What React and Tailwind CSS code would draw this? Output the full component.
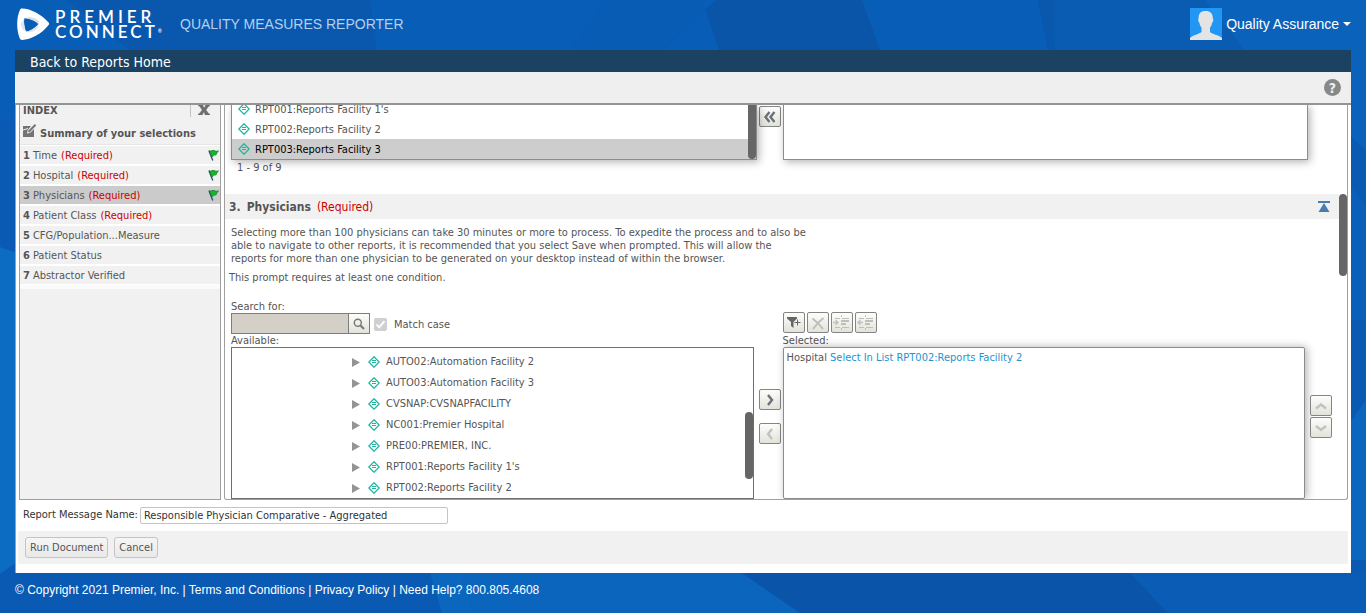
import React from "react";

const ui = "font-['DejaVu_Sans_Condensed','Noto_Sans',sans-serif]";
const iconButton =
  "flex h-[21px] w-[22px] shrink-0 items-center justify-center rounded-[2px] border border-[#858585] bg-linear-to-b from-[#fdfdfb] to-[#e2e3da]";

function Backdrop() {
  return (
    <svg
      className="absolute inset-0 -z-10 h-full w-full"
      viewBox="0 0 1366 613"
      preserveAspectRatio="none"
      aria-hidden="true"
    >
      <rect width="1366" height="613" fill="#0a5ab3" />
      <path d="M0 0H66L130 50V120H0Z" fill="#085db6" />
      <path d="M66 0H370L377 50H130Z" fill="#0a58ae" />
      <path d="M370 0H606L571 50H377Z" fill="#085db6" />
      <path d="M606 0H702L719 50H571Z" fill="#085cb4" />
      <path d="M716 0H862L880 50H662Z" fill="#0b55a9" />
      <path d="M702 0H716L662 50H719Z" fill="#085db6" />
      <path d="M862 0H1038L1048 50H880Z" fill="#085db6" />
      <path d="M1038 0H1054L1055 50H1048Z" fill="#0a58ae" />
      <path d="M1054 0H1205L1245 50H1055Z" fill="#0a5bb2" />
      <path d="M1205 0H1366V150L1320 110L1245 50Z" fill="#0a62bb" />
      <path d="M1345 180L1366 205V320H1345Z" fill="#0a5fb9" />
      <path d="M0 247L20 254V560L0 574Z" fill="#0b6cc2" />
      <path d="M1345 430L1366 400V560H1345Z" fill="#0b66be" />
      <path d="M430 573H462L473 613H442Z" fill="#0b66be" />
      <path d="M462 573H742L800 613H473Z" fill="#0b65bd" />
      <path d="M742 573H1130L1168 613H800Z" fill="#0a55aa" />
      <path d="M1130 573H1366V613H1168Z" fill="#0a5cb5" />
    </svg>
  );
}

function Logo() {
  return (
    <a href="#home" className="flex items-center gap-[6px] text-white" aria-label="Premier Connect">
      <svg width="32" height="32" viewBox="0 0 32 32" className="shrink-0" aria-hidden="true">
        <path
          fillRule="evenodd"
          fill="#fff"
          d="M5 0.4C13 0.2 25 6.5 31.6 14.4C32.2 15.2 32.2 16.2 31.6 17C25 25.500 14 31.700 5.200 32C3.800 32 3.200 31.500 2.700 30.300C-0.700 21.500 -0.700 10 3 1.800C3.400 0.800 4 0.400 5 0.400ZM7.300 10.300C6.600 14 7.200 19.500 9 23.600C13.500 23 18.500 20 21.400 16C18.500 13 12.500 10.300 7.300 10.300Z"
        />
        <path d="M7.300 10.300C12.500 10.300 18.500 13 21.400 16L22.500 13.500C17.500 9.500 12 8.300 7.300 10.300Z" fill="#d9dee6" />
        <path d="M9 23.600C7.200 19.500 6.600 14 7.300 10.300L3.500 16C4.300 20 6 22.500 9 23.600Z" fill="#e2e6ec" />
        <path d="M9 23.600C13.500 23 18.500 20 21.400 16L21 20C17.500 23.500 13 25.500 9 23.600Z" fill="#e2e6ec" />
      </svg>
      <span className="flex flex-col font-['Lato',sans-serif] text-[17px] leading-[15px] font-semibold tracking-[4px]">
        <span>PREMIER</span>
        <span className="flex tracking-[3px]">
          CONNECT<small className="self-end text-[5px] leading-[15px] tracking-normal">®</small>
        </span>
      </span>
    </a>
  );
}

function Header() {
  return (
    <header className="flex h-[50px] items-center justify-between pr-[15px] pb-[2px] pl-[17px] font-['Liberation_Sans',Arial,sans-serif]">
      <div className="flex items-center">
        <div className="w-[163px]">
          <Logo />
        </div>
        <span className="text-[14px] text-[#b3d0ee]">QUALITY MEASURES REPORTER</span>
      </div>
      <button type="button" className="flex items-center text-sm text-white">
        <svg width="32" height="32" viewBox="0 0 32 32" className="mr-1" aria-hidden="true">
          <rect width="32" height="32" fill="#2196f3" />
          <path
            d="M15.500 3C20.500 3 23 5.500 22.800 10.500C23.800 11 23.300 14 22 15C21.600 17 21 18.500 20 19.500V24C21.500 26 29 27 32 30V32H0V30C3 27 9.500 26 11.500 24V19.500C10.500 18.500 9.800 17 9.500 15C8.200 14 7.800 11 8.600 10.500C8.400 5.500 10.500 3 15.500 3Z"
            fill="#e4e4e4"
          />
        </svg>
        Quality Assurance
        <svg width="8" height="4" viewBox="0 0 8 4" className="ml-1" aria-hidden="true">
          <path d="M0 0H8L4 4Z" fill="#fff" />
        </svg>
      </button>
    </header>
  );
}

function Diamond() {
  return (
    <svg width="12" height="12" viewBox="0 0 12 12" fill="none" stroke="#1fb5a0" className="shrink-0" aria-hidden="true">
      <path d="M6 0.800L11.200 6L6 11.200L0.800 6Z" strokeWidth="1.300" />
      <path d="M4 4.500H8M4 6.500H8" strokeWidth="1" />
    </svg>
  );
}

function Flag() {
  return (
    <svg width="11" height="12" viewBox="0 0 11 12" className="shrink-0" aria-hidden="true">
      <path d="M1 2L4.800 11.500" stroke="#2c4a7c" strokeWidth="1.300" />
      <path d="M1 1.500C3 3 4.500 0.800 6 1.500C7.500 2.300 9 2.500 10.500 1.800C9 3.500 8.500 4.500 8 6C6.500 5.500 5.500 6.500 4 8Z" fill="#18b52c" stroke="#0d7a1c" strokeWidth="0.700" />
    </svg>
  );
}

function Chevron({ d, muted }) {
  return (
    <svg width="14" height="14" viewBox="0 0 14 14" fill="none" aria-hidden="true">
      <path d={d} stroke={muted ? "#bfc3bf" : "#6b7178"} strokeWidth="2.400" />
    </svg>
  );
}

const sections = [
  { name: "Time", required: true, flag: true },
  { name: "Hospital", required: true, flag: true },
  { name: "Physicians", required: true, flag: true, active: true },
  { name: "Patient Class", required: true },
  { name: "CFG/Population...Measure" },
  { name: "Patient Status" },
  { name: "Abstractor Verified" },
];

function IndexPanel() {
  return (
    <nav aria-label="Index" className="w-[202px] shrink-0 border-x border-b border-[#a0a0a0] bg-[#f1f1f1]">
      <div className="flex h-[13px] items-start justify-between pr-[10px] pl-[3px]">
        <h2 className="text-[11px] leading-[11px] font-bold">INDEX</h2>
        <button type="button" aria-label="Close index" className="flex h-3 items-start border-l border-[#c4c4c4] pl-[7px]">
          <svg width="12" height="10" viewBox="0 0 12 10" aria-hidden="true">
            <path d="M0.500 0H5V1L6.200 3L7.500 1V0H11.500V1H10.800L7.900 5L11 9H12V10H7V9L5.900 7L4.500 9V10H0V9H1L4.200 5L1.500 1H0.500Z" fill="#6e6e6e" stroke="#6e6e6e" strokeWidth="0.500" />
          </svg>
        </button>
      </div>
      <a href="#summary" className="flex h-[27px] items-center gap-[3px] border-b border-[#e6e6e6] pt-[5px] pl-[3px] font-bold">
        <svg width="14" height="14" viewBox="0 0 14 14" className="mb-[5px]" aria-hidden="true">
          <path d="M0 2H8L4.500 6.500L4 9.500L7 9L11 5V13H0Z" fill="#747474" />
          <path d="M0 6L5 4.500" stroke="#f1f1f1" />
          <path d="M5.500 8L12.500 0.800" stroke="#747474" strokeWidth="2" />
        </svg>
        Summary of your selections
      </a>
      <ol className="border-b-4 border-[#fbfbfb]">
        {sections.map((s, i) => (
          <li key={s.name} className={s.active ? "bg-[#cbcbcb]" : "bg-[#f1f1f1]"}>
            <a href={"#section-" + (i + 1)} className="flex h-5 items-center border-y border-white pr-px pl-[3px]">
              <b className="mr-[3px]">{i + 1}</b>
              {s.name}
              {s.required && <span className="ml-[4px] text-[#c00]">(Required)</span>}
              {s.flag && (
                <span className="ml-auto">
                  <Flag />
                </span>
              )}
            </a>
          </li>
        ))}
      </ol>
    </nav>
  );
}

const hospitals = ["RPT001:Reports Facility 1's", "RPT002:Reports Facility 2", "RPT003:Reports Facility 3"];

function HospitalPicker() {
  return (
    <section aria-label="Hospital" className="h-[89px] pr-[39px] pl-[6px]">
      <div className="flex h-[55px] gap-[2px]">
        <div className="relative flex flex-1 flex-col justify-end border border-t-0 border-[#8c8c8c] bg-white shadow-[2px_2px_8px_rgba(0,0,0,0.3)]">
          <ul className="flex h-[54px] flex-col justify-end">
            {hospitals.map((h, i) => (
              <li
                key={h}
                className={"flex h-5 shrink-0 items-center gap-[5px] pl-[6px] " + (i === 2 ? "bg-[#cdcdcd] text-black" : "")}
              >
                <Diamond />
                {h}
              </li>
            ))}
          </ul>
          <div className="absolute right-0 bottom-0 h-[54px] w-2 rounded-b-full bg-[#666]" />
        </div>
        <button type="button" aria-label="Remove all" className={iconButton + " mt-px"}>
          <Chevron d="M6.500 2L2.500 7L6.500 12M11.500 2L7.500 7L11.500 12" />
        </button>
        <div className="flex-1 border border-t-0 border-[#8c8c8c] bg-white shadow-[2px_2px_8px_rgba(0,0,0,0.3)]" />
      </div>
      <p className="pl-[6px] leading-[15px]">1 - 9 of 9</p>
    </section>
  );
}

const facilities = [
  "AUTO02:Automation Facility 2",
  "AUTO03:Automation Facility 3",
  "CVSNAP:CVSNAPFACILITY",
  "NC001:Premier Hospital",
  "PRE00:PREMIER, INC.",
  "RPT001:Reports Facility 1's",
  "RPT002:Reports Facility 2",
];

function AvailableColumn() {
  return (
    <div className="flex flex-1 flex-col">
      <label htmlFor="search" className="leading-[12px]">
        Search for:
      </label>
      <div className="flex h-[21px] items-center">
        <input id="search" type="text" disabled className="h-[21px] w-[117px] border border-r-0 border-[#7d7d7d] bg-[#d4d0c8] px-1" />
        <button
          type="button"
          aria-label="Search"
          className="flex h-[21px] w-[22px] items-center justify-center border border-[#7d7d7d] bg-linear-to-b from-[#fdfdfb] to-[#e2e3da]"
        >
          <svg width="12" height="12" viewBox="0 0 12 12" fill="none" stroke="#777" aria-hidden="true">
            <circle cx="4.800" cy="4.800" r="3.500" strokeWidth="1.400" />
            <path d="M7.500 7.500L11 11" strokeWidth="2" />
          </svg>
        </button>
        <label className="ml-1 flex items-center pt-[2px]">
          <span className="relative mr-[7px] flex h-[13px] w-[13px]">
            <input type="checkbox" defaultChecked disabled className="h-[13px] w-[13px] appearance-none rounded-[2px] bg-[#d0d0d0]" />
            <svg width="13" height="13" viewBox="0 0 13 13" className="absolute inset-0" fill="none" aria-hidden="true">
              <path d="M2.500 6.500L5.200 9.300L10.500 3.200" stroke="#fff" strokeWidth="1.800" />
            </svg>
          </span>
          Match case
        </label>
      </div>
      <h4 className="leading-[13px]">Available:</h4>
      <div className="relative h-[152px] overflow-hidden border border-[#6f6f6f] bg-white">
        <ul className="pt-[3px]">
          {facilities.map((f) => (
            <li key={f} className="flex h-[21px] items-center pl-[120px]">
              <svg width="8" height="10" viewBox="0 0 8 10" className="mr-2" aria-hidden="true">
                <path d="M0 1L8 5.500L0 10Z" fill="#949494" />
              </svg>
              <span className="flex items-center gap-[6px]">
                <Diamond />
                {f}
              </span>
            </li>
          ))}
        </ul>
        <div className="absolute top-16 right-0 h-[67px] w-2 rounded-full bg-[#666]" />
      </div>
    </div>
  );
}

function IndentIcon({ flip }) {
  return (
    <svg width="18" height="17" viewBox="0 0 18 17" fill="none" stroke="#bdbfba" aria-hidden="true">
      <path d="M2 4.500H7M9 4.500H16M2 13.500H7M9 13.500H16M8.500 1V3M8.500 14V16" />
      <path d="M8 7H16M8 10H13" strokeWidth="2" />
      <path d={flip ? "M6 8.500H1M3.500 6L1 8.500L3.500 11" : "M0 8.500H5M2.500 6L5 8.500L2.500 11"} strokeWidth="1.300" />
    </svg>
  );
}

function SelectedColumn() {
  return (
    <div className="flex flex-1 flex-col pt-[11px]">
      <div className="flex gap-[2px]">
        <button type="button" aria-label="Add filter" className={iconButton}>
          <svg width="14" height="13" viewBox="0 0 14 13" aria-hidden="true">
            <path d="M0 1H10V2.500L6.500 6V12L4 10V6L0 2.500Z" fill="#666" />
            <path d="M7.500 6.500H13.500M10.500 3.500V9.500" stroke="#666" />
          </svg>
        </button>
        <button type="button" aria-label="Delete" className={iconButton}>
          <svg width="14" height="14" viewBox="0 0 14 14" aria-hidden="true">
            <path d="M1.500 2.500C5 5 9 9 12 13M12.500 2C8.500 5 5 9 2 13" stroke="#bdbfba" strokeWidth="2" fill="none" />
          </svg>
        </button>
        <button type="button" aria-label="Indent" className={iconButton}>
          <IndentIcon />
        </button>
        <button type="button" aria-label="Outdent" className={iconButton}>
          <IndentIcon flip />
        </button>
      </div>
      <h4 className="pt-px leading-[13px]">Selected:</h4>
      <div className="h-[152px] rounded-[2px] border border-[#8c8c8c] bg-white px-[3px] pt-[3px] leading-[13px] shadow-[2px_0px_9px_rgba(0,0,0,0.3)]">
        Hospital <span className="text-[#1c95ce]">Select In List RPT002:Reports Facility 2</span>
      </div>
    </div>
  );
}

function PhysicianSection() {
  return (
    <section aria-label="Physicians">
      <div className="mr-2 flex h-[25px] items-center bg-[#f1f1f1] pr-[9px] pl-1 text-xs">
        <h3 className="flex items-center font-bold">
          <span className="mr-[6px]">3.</span>Physicians
        </h3>
        <span className="ml-[6px] text-[#c00]">(Required)</span>
        <a href="#top" aria-label="Back to top" className="ml-auto">
          <svg width="12" height="11" viewBox="0 0 12 11" aria-hidden="true">
            <path d="M0 0H12V2H0ZM6 2L11.500 11H0.500Z" fill="#4a7cb0" />
          </svg>
        </a>
      </div>
      <p className="pt-[7px] pl-[6px] leading-[13px]">
        Selecting more than 100 physicians can take 30 minutes or more to process. To expedite the process and to also be
        <br />
        able to navigate to other reports, it is recommended that you select Save when prompted. This will allow the
        <br />
        reports for more than one physician to be generated on your desktop instead of within the browser.
      </p>
      <p className="mt-[6px] mb-[17px] pl-1 leading-[13px]">This prompt requires at least one condition.</p>
      <div className="flex pr-[15px] pl-[6px]">
        <AvailableColumn />
        <div className="flex flex-col gap-[13px] pt-[88px] pr-[2px] pl-[5px]">
          <button type="button" aria-label="Add" className={iconButton}>
            <Chevron d="M5 2L9 7L5 12" />
          </button>
          <button type="button" aria-label="Remove" disabled className={iconButton}>
            <Chevron d="M9 2L5 7L9 12" muted />
          </button>
        </div>
        <SelectedColumn />
        <div className="flex flex-col gap-px pt-[94px] pl-[5px]">
          <button type="button" aria-label="Move up" disabled className={iconButton}>
            <Chevron d="M2 9.500L7 5.500L12 9.500" muted />
          </button>
          <button type="button" aria-label="Move down" disabled className={iconButton}>
            <Chevron d="M2 5L7 9L12 5" muted />
          </button>
        </div>
      </div>
    </section>
  );
}

export default function App() {
  return (
    <div className={"relative isolate flex min-h-screen flex-col text-[11px] leading-[13px] text-[#555] " + ui}>
      <Backdrop />
      <Header />
      <main className="mx-[15px] bg-white">
        <div className="flex h-[22px] items-center bg-[#1b4262] px-[15px] pt-[2px]">
          <a href="#reports" className="text-sm text-white">
            Back to Reports Home
          </a>
        </div>
        <div className="flex h-[33px] items-center justify-end border-b-2 border-[#949494] bg-[#efefef] pr-[10px]">
          <button type="button" aria-label="Help" className="flex h-[17px] w-[17px] items-center justify-center rounded-full bg-[#888] text-sm font-bold text-[#efefef]">
            ?
          </button>
        </div>
        <div className="border-l border-[#a0a0a0] pb-[9px]">
          <div className="flex gap-[3px] pr-[3px] pl-[3px]">
            <IndexPanel />
            <div className="relative h-[395px] flex-1 overflow-hidden rounded-b-[3px] border-x border-b border-[#a0a0a0]">
              <HospitalPicker />
              <PhysicianSection />
              <div className="absolute top-[89px] right-0 h-[82px] w-2 rounded-full bg-[#666]" />
            </div>
          </div>
          <div className="flex h-[31px] items-center gap-[2px] pl-[7px] text-[#333]">
            <label htmlFor="message-name" className="pb-[2px]">
              Report Message Name:
            </label>
            <input
              id="message-name"
              type="text"
              defaultValue="Responsible Physician Comparative - Aggregated"
              className="h-[17px] w-[308px] rounded-[2px] border border-[#c4c4c4] bg-white px-[3px]"
            />
          </div>
          <div className="mr-[3px] ml-[2px] flex h-[33px] items-center gap-[6px] bg-[#f1f1f1] pl-[7px]">
            <button type="button" className="h-[21px] rounded-[3px] border border-[#c4c4c4] bg-linear-to-b from-[#f6f6f6] to-[#e9e9e9] px-1">
              Run Document
            </button>
            <button type="button" className="h-[21px] rounded-[3px] border border-[#c4c4c4] bg-linear-to-b from-[#f6f6f6] to-[#e9e9e9] px-1">
              Cancel
            </button>
          </div>
        </div>
      </main>
      <footer className="px-[15px] pt-[9px] font-['Liberation_Sans',Arial,sans-serif] text-xs leading-4 font-medium text-white">
        © Copyright 2021 Premier, Inc. | <a href="#terms">Terms and Conditions</a> | <a href="#privacy">Privacy Policy</a> | Need Help?
        800.805.4608
      </footer>
    </div>
  );
}
